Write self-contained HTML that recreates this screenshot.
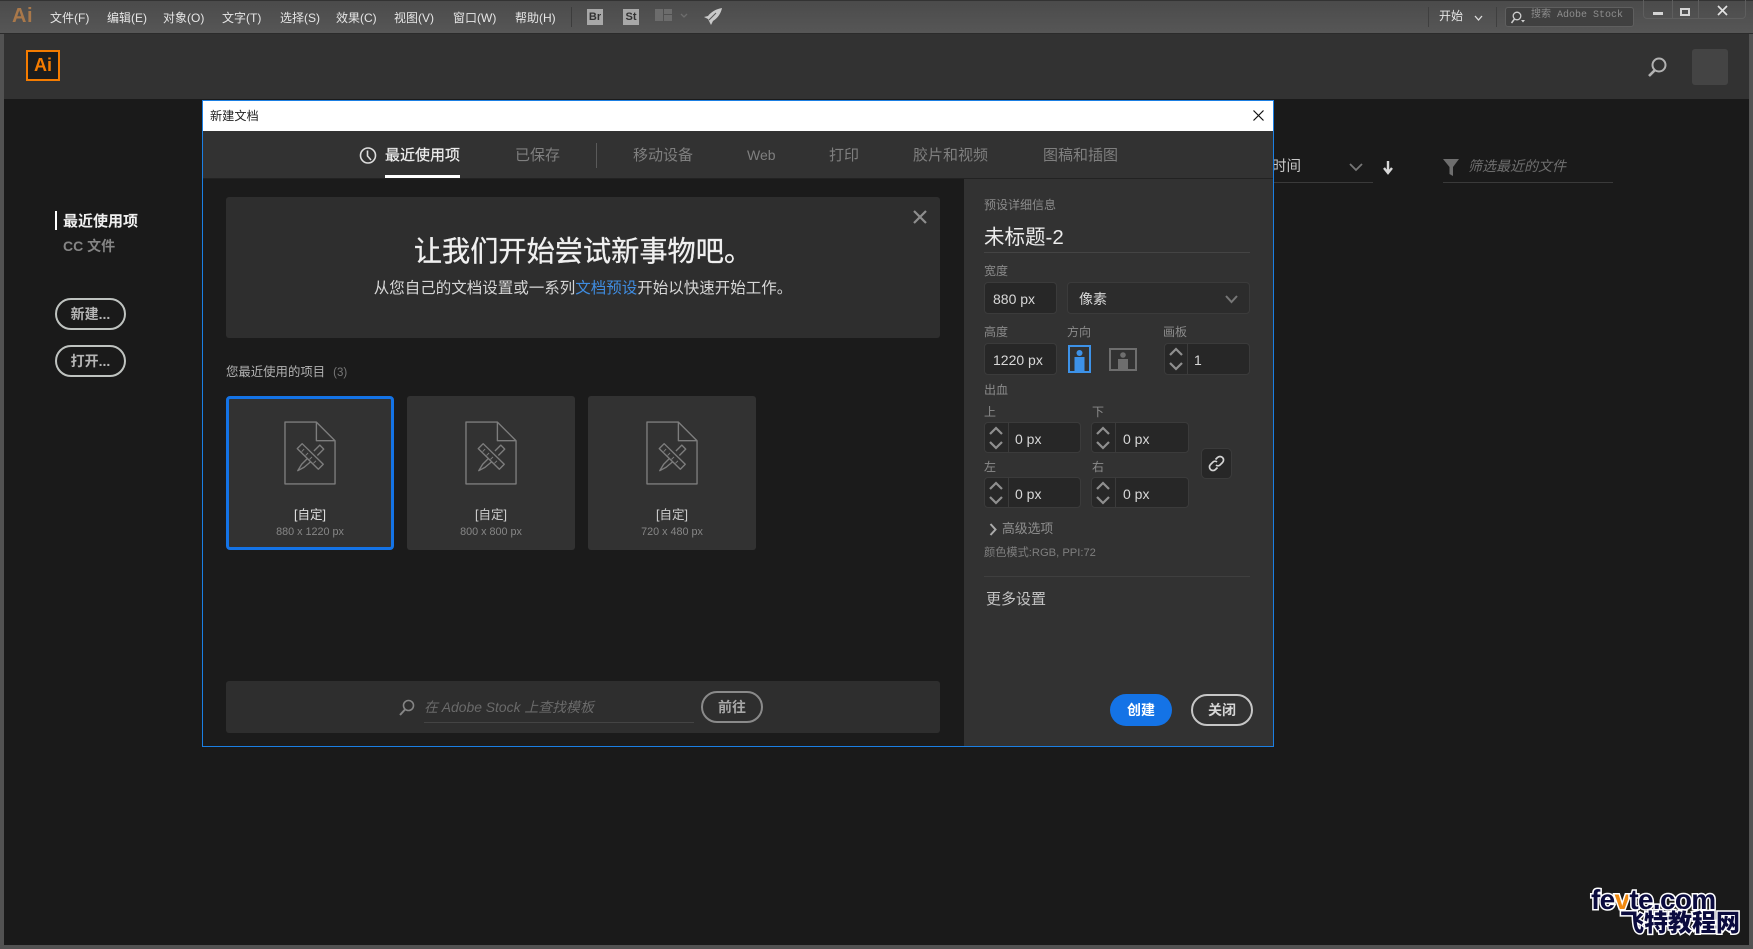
<!DOCTYPE html>
<html lang="zh"><head><meta charset="utf-8"><title>新建文档</title>
<style>
html,body{margin:0;padding:0;width:1753px;height:949px;overflow:hidden;background:#525252}
*{box-sizing:border-box}
body{position:relative;font-family:"Liberation Sans","Noto Sans CJK SC",sans-serif;color:#ccc}
.a{position:absolute}
.t{position:absolute;white-space:nowrap;line-height:20px;height:20px}
svg{position:absolute;overflow:visible}
.lab{font-size:12px;color:#8b8b8b}
.inp{position:absolute;background:#272727;border:1px solid #3b3b3b;border-radius:4px}
.val{position:absolute;white-space:nowrap;line-height:20px;height:20px;font-size:14px;color:#d8d8d8}
.div{position:absolute;width:1px;background:#3b3b3b}
.card{position:absolute;top:396px;width:168px;height:154px;background:#323232;border-radius:3px}
.menu{font-size:12px;color:#e6e6e6;top:8px}
.tab{font-size:15px;color:#7f7f7f;top:146px}
.pill{position:absolute;border-radius:17px;font-weight:700;font-size:14px;text-align:center}
</style></head><body>
<svg width="0" height="0" style="position:absolute"><defs>
<symbol id="doc" viewBox="0 0 54 66" overflow="visible">
<g fill="none" stroke="#7d7d7d" stroke-width="1.4" stroke-linejoin="round">
<path d="M1 1H33L52 20V64H1Z"/><path d="M33 1V20H52"/>
<path d="M13.500 28L18.500 23L40 44L35 49Z"/>
<path d="M18 31L20.500 28.500M22 35L24.500 32.500M26 39L28.500 36.500M30 43L32.500 40.500" stroke-width="1"/>
<path d="M30.500 30.500L36.500 24.500L40.500 28.500L34 35"/>
<path d="M23.500 38.500L18 44L14 50.500L20.500 47L27 41.500"/>
</g></symbol>
<symbol id="sup" viewBox="0 0 16 26" overflow="visible"><path d="M2 9L8 3L14 9M2 17L8 23L14 17" fill="none" stroke="#8f8f8f" stroke-width="2.200"/></symbol>
</defs></svg>

<!-- title bar -->
<div class="a" style="left:0;top:0;width:1753px;height:34px;background:linear-gradient(#4b4b4b,#565656);border-bottom:1px solid #2b2b2b;border-top:1px solid #333"></div>
<div class="t" style="left:12px;top:6px;font-size:20px;font-weight:700;color:#a9784a;letter-spacing:.5px">Ai</div>
<div class="t menu" style="left:50px">文件(F)</div>
<div class="t menu" style="left:107px">编辑(E)</div>
<div class="t menu" style="left:163px">对象(O)</div>
<div class="t menu" style="left:222px">文字(T)</div>
<div class="t menu" style="left:280px">选择(S)</div>
<div class="t menu" style="left:336px">效果(C)</div>
<div class="t menu" style="left:394px">视图(V)</div>
<div class="t menu" style="left:453px">窗口(W)</div>
<div class="t menu" style="left:515px">帮助(H)</div>
<div class="a" style="left:571px;top:7px;width:1px;height:20px;background:#3c3c3c"></div>
<div class="a" style="left:587px;top:9px;width:16px;height:16px;background:#a8a8a8;color:#333;font-size:11px;line-height:16px;text-align:center;font-weight:700">Br</div>
<div class="a" style="left:623px;top:9px;width:16px;height:16px;background:#a8a8a8;color:#333;font-size:11px;line-height:16px;text-align:center;font-weight:700">St</div>
<svg style="left:655px;top:9px" width="40" height="14"><g fill="#6c6c6c"><rect width="8" height="12"/><rect x="9" width="8" height="5"/><rect x="9" y="6" width="8" height="6"/></g><path d="M26 5L29 8L32 5" fill="none" stroke="#6d6d6d" stroke-width="1.300"/></svg>
<svg style="left:704px;top:8px" width="18" height="18"><path d="M18 0C12 1 7 4 4 8L0 9L4 11L5 13L7 17L9 13C14 10 17 5 18 0Z" fill="#c9c9c9"/><path d="M5 12L12 5" stroke="#555" stroke-width="1"/></svg>
<div class="a" style="left:1428px;top:7px;width:1px;height:20px;background:#3f3f3f"></div>
<div class="t" style="left:1439px;top:6px;font-size:12px;color:#e6e6e6">开始</div>
<svg style="left:1474px;top:15px" width="9" height="7"><path d="M1 1L4.500 5L8 1" fill="none" stroke="#ddd" stroke-width="1.300"/></svg>
<div class="a" style="left:1496px;top:7px;width:1px;height:20px;background:#3f3f3f"></div>
<div class="a" style="left:1505px;top:7px;width:129px;height:20px;background:#404040;border:1px solid #5f5f5f;border-radius:3px"></div>
<svg style="left:1510px;top:11px" width="16" height="13"><circle cx="7" cy="5" r="3.800" fill="none" stroke="#cfcfcf" stroke-width="1.300"/><path d="M4.500 8L1.500 12" stroke="#cfcfcf" stroke-width="1.500"/><path d="M11 9H15L13 11.500Z" fill="#cfcfcf"/></svg>
<div class="t" style="left:1531px;top:6px;font-size:10px;color:#8d8d8d;font-family:'Liberation Mono','Noto Sans CJK SC',monospace">搜索 Adobe Stock</div>
<div class="a" style="left:1643px;top:-1px;width:103px;height:20px;border:1px solid #5e5e5e;border-radius:0 0 4px 4px"></div>
<div class="a" style="left:1672px;top:0;width:1px;height:19px;background:#5e5e5e"></div>
<div class="a" style="left:1698px;top:0;width:1px;height:19px;background:#5e5e5e"></div>
<div class="a" style="left:1653px;top:12px;width:10px;height:3px;background:#d4d4d4"></div>
<div class="a" style="left:1680px;top:8px;width:10px;height:8px;border:2px solid #d4d4d4"></div>
<svg style="left:1717px;top:5px" width="11" height="11"><path d="M1 1L10 10M10 1L1 10" stroke="#e2e2e2" stroke-width="1.700"/></svg>

<!-- app frame -->
<div class="a" style="left:4px;top:34px;width:1745px;height:65px;background:#323232"></div>
<div class="a" style="left:4px;top:99px;width:1745px;height:846px;background:#1a1a1a"></div>
<div class="a" style="left:26px;top:50px;width:34px;height:31px;background:#1d1d1d;border:2px solid #f57c00;color:#f57c00;font-size:18px;font-weight:700;line-height:27px;text-align:center">Ai</div>
<svg style="left:1647px;top:57px" width="21" height="20"><circle cx="12" cy="8" r="6.500" fill="none" stroke="#b2b2b2" stroke-width="2"/><path d="M8 13L2 19" stroke="#b2b2b2" stroke-width="2.600"/></svg>
<div class="a" style="left:1692px;top:49px;width:36px;height:36px;background:#444;border-radius:3px"></div>

<!-- left nav -->
<div class="a" style="left:55px;top:211px;width:2px;height:19px;background:#fff"></div>
<div class="t" style="left:63px;top:212px;font-size:15px;font-weight:700;color:#f0f0f0">最近使用项</div>
<div class="t" style="left:63px;top:236px;font-size:14px;font-weight:700;color:#858585">CC 文件</div>
<div class="pill" style="left:55px;top:298px;width:71px;height:32px;border:2px solid #bfc3c0;color:#b5b5b5;line-height:28px">新建...</div>
<div class="pill" style="left:55px;top:345px;width:71px;height:32px;border:2px solid #bfc3c0;color:#b5b5b5;line-height:28px">打开...</div>

<!-- right behind -->
<div class="t" style="left:1272px;top:157px;font-size:14.500px;color:#c8c8c8">时间</div>
<svg style="left:1349px;top:163px" width="14" height="9"><path d="M1 1L7 7L13 1" fill="none" stroke="#777" stroke-width="1.800"/></svg>
<div class="a" style="left:1274px;top:182px;width:99px;height:1px;background:#3a3a3a"></div>
<svg style="left:1383px;top:161px" width="10" height="13"><path d="M5 0V11M1 7L5 12L9 7" fill="none" stroke="#d8d8d8" stroke-width="2.400"/></svg>
<svg style="left:1443px;top:159px" width="16" height="17"><path d="M0 0H16L10 8V17L6.500 15V8Z" fill="#6e6e6e"/></svg>
<div class="t" style="left:1468px;top:156px;font-size:14px;font-style:italic;color:#6f6f6f">筛选最近的文件</div>
<div class="a" style="left:1443px;top:182px;width:170px;height:1px;background:#3a3a3a"></div>

<!-- dialog -->
<div class="a" style="left:202px;top:100px;width:1072px;height:647px;background:#1b1b1b;border:1px solid #1b7fe3"></div>
<div class="a" style="left:203px;top:101px;width:1070px;height:30px;background:#fff"></div>
<div class="t" style="left:210px;top:106px;font-size:12.200px;color:#222">新建文档</div>
<svg style="left:1253px;top:110px" width="11" height="11"><path d="M.5.500L10.500 10.500M10.500.500L.5 10.500" stroke="#111" stroke-width="1.200"/></svg>
<div class="a" style="left:203px;top:131px;width:1070px;height:47px;background:#323232"></div>
<div class="a" style="left:203px;top:178px;width:1070px;height:1px;background:#222"></div>
<svg style="left:359px;top:147px" width="18" height="17"><circle cx="9" cy="8.500" r="7.500" fill="none" stroke="#ddd" stroke-width="1.600"/><path d="M8.500 3.500V9L12 13" fill="none" stroke="#ddd" stroke-width="1.600"/></svg>
<div class="t tab" style="left:385px;color:#ececec;-webkit-text-stroke:.25px #ececec">最近使用项</div>
<div class="a" style="left:385px;top:175px;width:75px;height:3px;background:#fff"></div>
<div class="t tab" style="left:515px">已保存</div>
<div class="a" style="left:596px;top:143px;width:1px;height:25px;background:#5a5a5a"></div>
<div class="t tab" style="left:633px">移动设备</div>
<div class="t tab" style="left:747px;top:145px;font-size:14px">Web</div>
<div class="t tab" style="left:829px">打印</div>
<div class="t tab" style="left:913px">胶片和视频</div>
<div class="t tab" style="left:1043px">图稿和插图</div>

<!-- hero -->
<div class="a" style="left:226px;top:197px;width:714px;height:141px;background:#2e2e2e;border-radius:3px"></div>
<svg style="left:913px;top:210px" width="14" height="14"><path d="M1 1L13 13M13 1L1 13" stroke="#8e8e8e" stroke-width="2.200"/></svg>
<div class="a" style="left:226px;top:233px;width:714px;height:36px;line-height:36px;text-align:center;font-size:28.200px;color:#f0f0f0;-webkit-text-stroke:.3px #f0f0f0">让我们开始尝试新事物吧。</div>
<div class="a" style="left:226px;top:279px;width:714px;height:20px;line-height:20px;text-align:center;font-size:15.500px;color:#d6d6d6">从您自己的文档设置或一系列<span style="color:#3f8ce0">文档预设</span>开始以快速开始工作。</div>
<div class="t" style="left:226px;top:362px;font-size:12.400px;color:#b2b2b2">您最近使用的项目<span style="color:#777;margin-left:8px;font-size:11.500px">(3)</span></div>

<!-- cards -->
<div class="card" style="left:226px;border:3px solid #1473e6;border-radius:4px"></div>
<div class="card" style="left:407px"></div>
<div class="card" style="left:588px"></div>
<svg style="left:284px;top:421px" width="53" height="65"><use href="#doc" width="53" height="65"/></svg>
<svg style="left:465px;top:421px" width="53" height="65"><use href="#doc" width="53" height="65"/></svg>
<svg style="left:646px;top:421px" width="53" height="65"><use href="#doc" width="53" height="65"/></svg>
<div class="t" style="left:226px;width:168px;top:505px;text-align:center;font-size:12.500px;color:#e2e2e2">[自定]</div>
<div class="t" style="left:226px;width:168px;top:522px;text-align:center;font-size:10.800px;color:#868686">880 x 1220 px</div>
<div class="t" style="left:407px;width:168px;top:505px;text-align:center;font-size:12.500px;color:#cfcfcf">[自定]</div>
<div class="t" style="left:407px;width:168px;top:522px;text-align:center;font-size:10.800px;color:#868686">800 x 800 px</div>
<div class="t" style="left:588px;width:168px;top:505px;text-align:center;font-size:12.500px;color:#cfcfcf">[自定]</div>
<div class="t" style="left:588px;width:168px;top:522px;text-align:center;font-size:10.800px;color:#868686">720 x 480 px</div>

<!-- stock bar -->
<div class="a" style="left:226px;top:681px;width:714px;height:52px;background:#2e2e2e;border-radius:3px"></div>
<svg style="left:398px;top:699px" width="17" height="17"><circle cx="10.500" cy="6.500" r="5" fill="none" stroke="#858585" stroke-width="1.600"/><path d="M7 10.500L2 16" stroke="#858585" stroke-width="2"/></svg>
<div class="t" style="left:424px;top:697px;font-size:13.900px;font-style:italic;color:#6a6a6a">在 Adobe Stock 上查找模板</div>
<div class="a" style="left:424px;top:722px;width:270px;height:1px;background:#444"></div>
<div class="pill" style="left:701px;top:691px;width:62px;height:32px;border:2px solid #8a8a8a;color:#a8a8a8;line-height:28px">前往</div>

<!-- right panel -->
<div class="a" style="left:964px;top:179px;width:309px;height:567px;background:#323232"></div>
<div class="t lab" style="left:984px;top:195px">预设详细信息</div>
<div class="t" style="left:984px;top:228px;font-size:20.500px;color:#ececec">未标题-2</div>
<div class="a" style="left:984px;top:252px;width:266px;height:1px;background:#444"></div>
<div class="t lab" style="left:984px;top:261px">宽度</div>
<div class="inp" style="left:984px;top:282px;width:73px;height:32px"></div>
<div class="val" style="left:993px;top:289px">880 px</div>
<div class="inp" style="left:1067px;top:282px;width:183px;height:32px;background:#2c2c2c"></div>
<div class="val" style="left:1079px;top:289px;color:#d8d8d8">像素</div>
<svg style="left:1225px;top:295px" width="13" height="9"><path d="M1 1L6.500 7L12 1" fill="none" stroke="#777" stroke-width="2"/></svg>

<div class="t lab" style="left:984px;top:322px">高度</div>
<div class="t lab" style="left:1067px;top:322px">方向</div>
<div class="t lab" style="left:1163px;top:322px">画板</div>
<div class="inp" style="left:984px;top:343px;width:73px;height:32px"></div>
<div class="val" style="left:993px;top:350px">1220 px</div>
<svg style="left:1068px;top:345px" width="23" height="28"><rect x="1" y="1" width="21" height="26" fill="none" stroke="#3d92e8" stroke-width="2"/><circle cx="11.500" cy="8" r="3" fill="#3d92e8"/><path d="M6.500 12H16.500V26H6.500Z" fill="#3d92e8"/></svg>
<svg style="left:1109px;top:348px" width="28" height="23"><rect x="1" y="1" width="26" height="21" fill="none" stroke="#6e6e6e" stroke-width="2"/><circle cx="14" cy="7" r="2.800" fill="#6e6e6e"/><path d="M9 11H19V22H9Z" fill="#6e6e6e"/></svg>
<div class="inp" style="left:1164px;top:343px;width:86px;height:32px"></div>
<div class="div" style="left:1187px;top:343px;height:32px"></div>
<svg style="left:1168px;top:346px" width="16" height="26"><use href="#sup" width="16" height="26"/></svg>
<div class="val" style="left:1194px;top:350px">1</div>

<div class="t lab" style="left:984px;top:380px">出血</div>
<div class="t lab" style="left:984px;top:402px">上</div>
<div class="t lab" style="left:1092px;top:402px">下</div>
<div class="inp" style="left:984px;top:422px;width:97px;height:31px"></div>
<div class="div" style="left:1008px;top:422px;height:31px"></div>
<svg style="left:988px;top:425px" width="16" height="26"><use href="#sup" width="16" height="26"/></svg>
<div class="val" style="left:1015px;top:429px">0 px</div>
<div class="inp" style="left:1091px;top:422px;width:98px;height:31px"></div>
<div class="div" style="left:1115px;top:422px;height:31px"></div>
<svg style="left:1095px;top:425px" width="16" height="26"><use href="#sup" width="16" height="26"/></svg>
<div class="val" style="left:1123px;top:429px">0 px</div>

<div class="t lab" style="left:984px;top:457px">左</div>
<div class="t lab" style="left:1092px;top:457px">右</div>
<div class="inp" style="left:984px;top:477px;width:97px;height:31px"></div>
<div class="div" style="left:1008px;top:477px;height:31px"></div>
<svg style="left:988px;top:480px" width="16" height="26"><use href="#sup" width="16" height="26"/></svg>
<div class="val" style="left:1015px;top:484px">0 px</div>
<div class="inp" style="left:1091px;top:477px;width:98px;height:31px"></div>
<div class="div" style="left:1115px;top:477px;height:31px"></div>
<svg style="left:1095px;top:480px" width="16" height="26"><use href="#sup" width="16" height="26"/></svg>
<div class="val" style="left:1123px;top:484px">0 px</div>

<div class="inp" style="left:1201px;top:448px;width:31px;height:31px;border-radius:5px"></div>
<svg style="left:1209px;top:456px" width="15" height="15"><g fill="none" stroke="#d4d4d4" stroke-width="1.700"><path d="M6.500 3.500L8.500 1.500A3 3 0 0 1 13.500 6.500L11 9A3 3 0 0 1 7 9"/><path d="M8.500 11.500L6.500 13.500A3 3 0 0 1 1.500 8.500L4 6A3 3 0 0 1 8 6"/></g></svg>

<svg style="left:989px;top:523px" width="8" height="13"><path d="M1.500 1L6.500 6.500L1.500 12" fill="none" stroke="#aaa" stroke-width="2"/></svg>
<div class="t" style="left:1002px;top:519px;font-size:12.800px;color:#8f8f8f">高级选项</div>
<div class="t" style="left:984px;top:543px;font-size:11.200px;color:#7f7f7f">颜色模式:RGB, PPI:72</div>
<div class="a" style="left:984px;top:576px;width:266px;height:1px;background:#3f3f3f"></div>
<div class="t" style="left:986px;top:590px;font-size:15px;color:#c4c4c4">更多设置</div>
<div class="pill" style="left:1110px;top:694px;width:62px;height:32px;background:#1473e6;color:#fff;line-height:32px">创建</div>
<div class="pill" style="left:1191px;top:694px;width:62px;height:32px;border:2px solid #c6c6c6;color:#d6d6d6;line-height:28px">关闭</div>

<!-- watermark -->
<div class="t" style="left:1591px;top:886px;height:28px;line-height:28px;font-size:28px;font-weight:700;letter-spacing:-.7px;color:#0b0b3e;-webkit-text-stroke:3px #fff;paint-order:stroke fill">fe<span style="color:#f08a12">v</span>te.com</div>
<div class="t" style="left:1620px;top:910px;height:28px;line-height:28px;font-size:24px;font-weight:900;color:#0b0b3e;-webkit-text-stroke:3px #fff;paint-order:stroke fill">飞特教程网</div>
</body></html>
